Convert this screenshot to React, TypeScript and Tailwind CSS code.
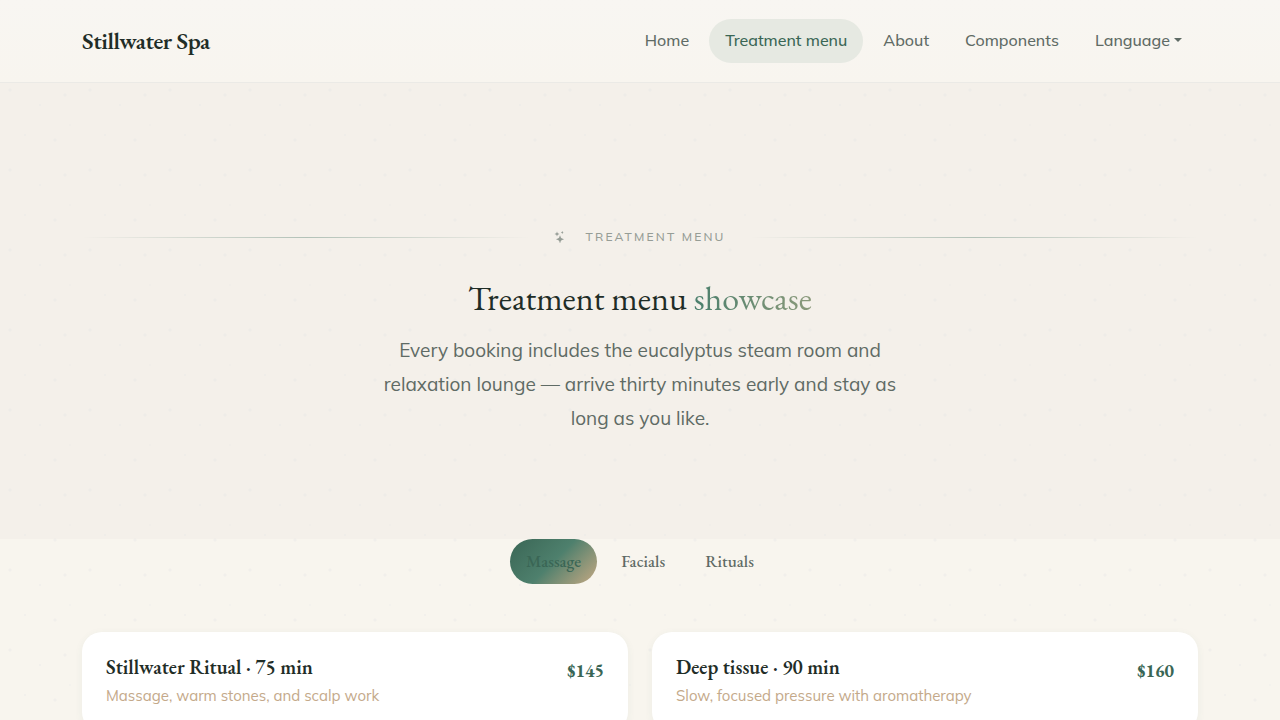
import React, { useState } from 'react';
import { BsStars } from 'react-icons/bs';

const SERIF = "font-['EB_Garamond','Liberation_Serif',serif]";

const NAV_ITEMS = ['Home', 'Treatment menu', 'About', 'Components'];

const MENU: Record<string, { name: string; detail: string; price: string }[]> = {
  Massage: [
    { name: 'Stillwater Ritual · 75 min', detail: 'Massage, warm stones, and scalp work', price: '$145' },
    { name: 'Deep tissue · 90 min', detail: 'Slow, focused pressure with aromatherapy', price: '$160' },
  ],
  Facials: [],
  Rituals: [],
};

function Navbar() {
  return (
    <header className="border-b border-[#ebeae6] bg-linear-to-b from-[#f8f6f2] to-[#f8f5ef]">
      <div className="mx-auto flex h-[82px] max-w-[1140px] items-center justify-between px-3">
        <a href="#" className={`${SERIF} text-2xl font-semibold tracking-[-0.02em] text-[#1f2d27]`}>
          Stillwater Spa
        </a>
        <nav className="flex gap-1 text-base font-medium text-[#5f6b65]">
          {NAV_ITEMS.map((item) => (
            <a
              key={item}
              href="#"
              className={`rounded-full px-4 pt-[9px] pb-[11px] leading-6 ${item === 'Treatment menu' ? 'bg-[#e6e9e2] text-[#3a6655]' : ''}`}
            >
              {item}
            </a>
          ))}
          <button type="button" className="flex items-center gap-1 px-4 pt-[9px] pb-[11px] leading-6">
            Language
            <span className="border-x-4 border-t-4 border-x-transparent border-t-[#5f6b65]" />
          </button>
        </nav>
      </div>
    </header>
  );
}

function Rule() {
  return <span className="h-px flex-1 bg-linear-to-r from-transparent via-[#b3c2b8] to-transparent" />;
}

function Hero() {
  return (
    <section className="bg-[#e8e4de]/25 pt-[142px] pb-[104px]">
      <div className="mx-auto max-w-[1140px] px-3">
        <div className="flex items-center gap-6">
          <Rule />
          <div className="flex items-center text-xs leading-6 font-medium tracking-[0.18em] text-[#969d96] uppercase">
            <BsStars className="mr-[19px] size-3" />
            Treatment menu
          </div>
          <Rule />
        </div>
        <h1 className={`${SERIF} mt-7 text-center text-[34px] leading-[42px] text-[#1f2d27]`}>
          Treatment menu{' '}
          <span className="bg-linear-to-r from-[#4a7f6c] to-[#8b9a7b] bg-clip-text text-transparent">showcase</span>
        </h1>
        <p className="mx-auto mt-[14px] max-w-[540px] text-center text-[19px] leading-[34px] text-[#5f6b65]">
          Every booking includes the eucalyptus steam room and relaxation lounge — arrive thirty minutes early and stay as
          long as you like.
        </p>
      </div>
    </section>
  );
}

export default function App() {
  const [tab, setTab] = useState('Massage');

  return (
    <div className="relative isolate min-h-screen bg-[#f8f5ee] font-['Mulish','Open_Sans',sans-serif] antialiased">
      <div className="absolute inset-0 -z-10 bg-[radial-gradient(circle_at_10px_10px,#f1efeb_1px,transparent_2px),radial-gradient(circle_at_65px_15px,#f1efeb_1px,transparent_2px),radial-gradient(circle_at_55px_60px,#f1efeb_1px,transparent_2px),radial-gradient(circle_at_40px_25px,#f2f0ec_1px,transparent_1px),radial-gradient(circle_at_25px_55px,#f2f0ec_1px,transparent_1px),radial-gradient(circle_at_70px_45px,#f4f2ed_1px,transparent_1px)] bg-size-[80px_80px]" />
      <Navbar />
      <main>
        <Hero />
        <section className="mx-auto max-w-[1140px] px-3 pb-12">
          <div role="tablist" className={`${SERIF} flex justify-center gap-2 text-[17px] font-medium`}>
            {Object.keys(MENU).map((name) => (
              <button
                key={name}
                type="button"
                role="tab"
                aria-selected={tab === name}
                onClick={() => setTab(name)}
                className={`rounded-full px-4 py-[9px] leading-[27px] ${
                  tab === name
                    ? 'bg-linear-135 from-[#3a6655] via-[#4e806d] via-50% to-[#c4a882] text-[#3a6655]'
                    : 'text-[#5f6b65]'
                }`}
              >
                {name}
              </button>
            ))}
          </div>
          <div className="mt-12 grid grid-cols-2 gap-6">
            {MENU[tab].map((t) => (
              <article key={t.name} className="flex items-start justify-between rounded-[20px] bg-white p-6 shadow-[0_2px_8px_rgba(58,102,85,0.06)]">
                <div>
                  <h2 className={`${SERIF} text-xl leading-[22px] font-semibold text-[#1f2d27]`}>{t.name}</h2>
                  <p className="mt-[6px] text-[15px] leading-6 text-[#c4a98a]">{t.detail}</p>
                </div>
                <span className={`${SERIF} text-lg leading-[30px] font-bold text-[#3a6655]`}>{t.price}</span>
              </article>
            ))}
          </div>
        </section>
      </main>
    </div>
  );
}
